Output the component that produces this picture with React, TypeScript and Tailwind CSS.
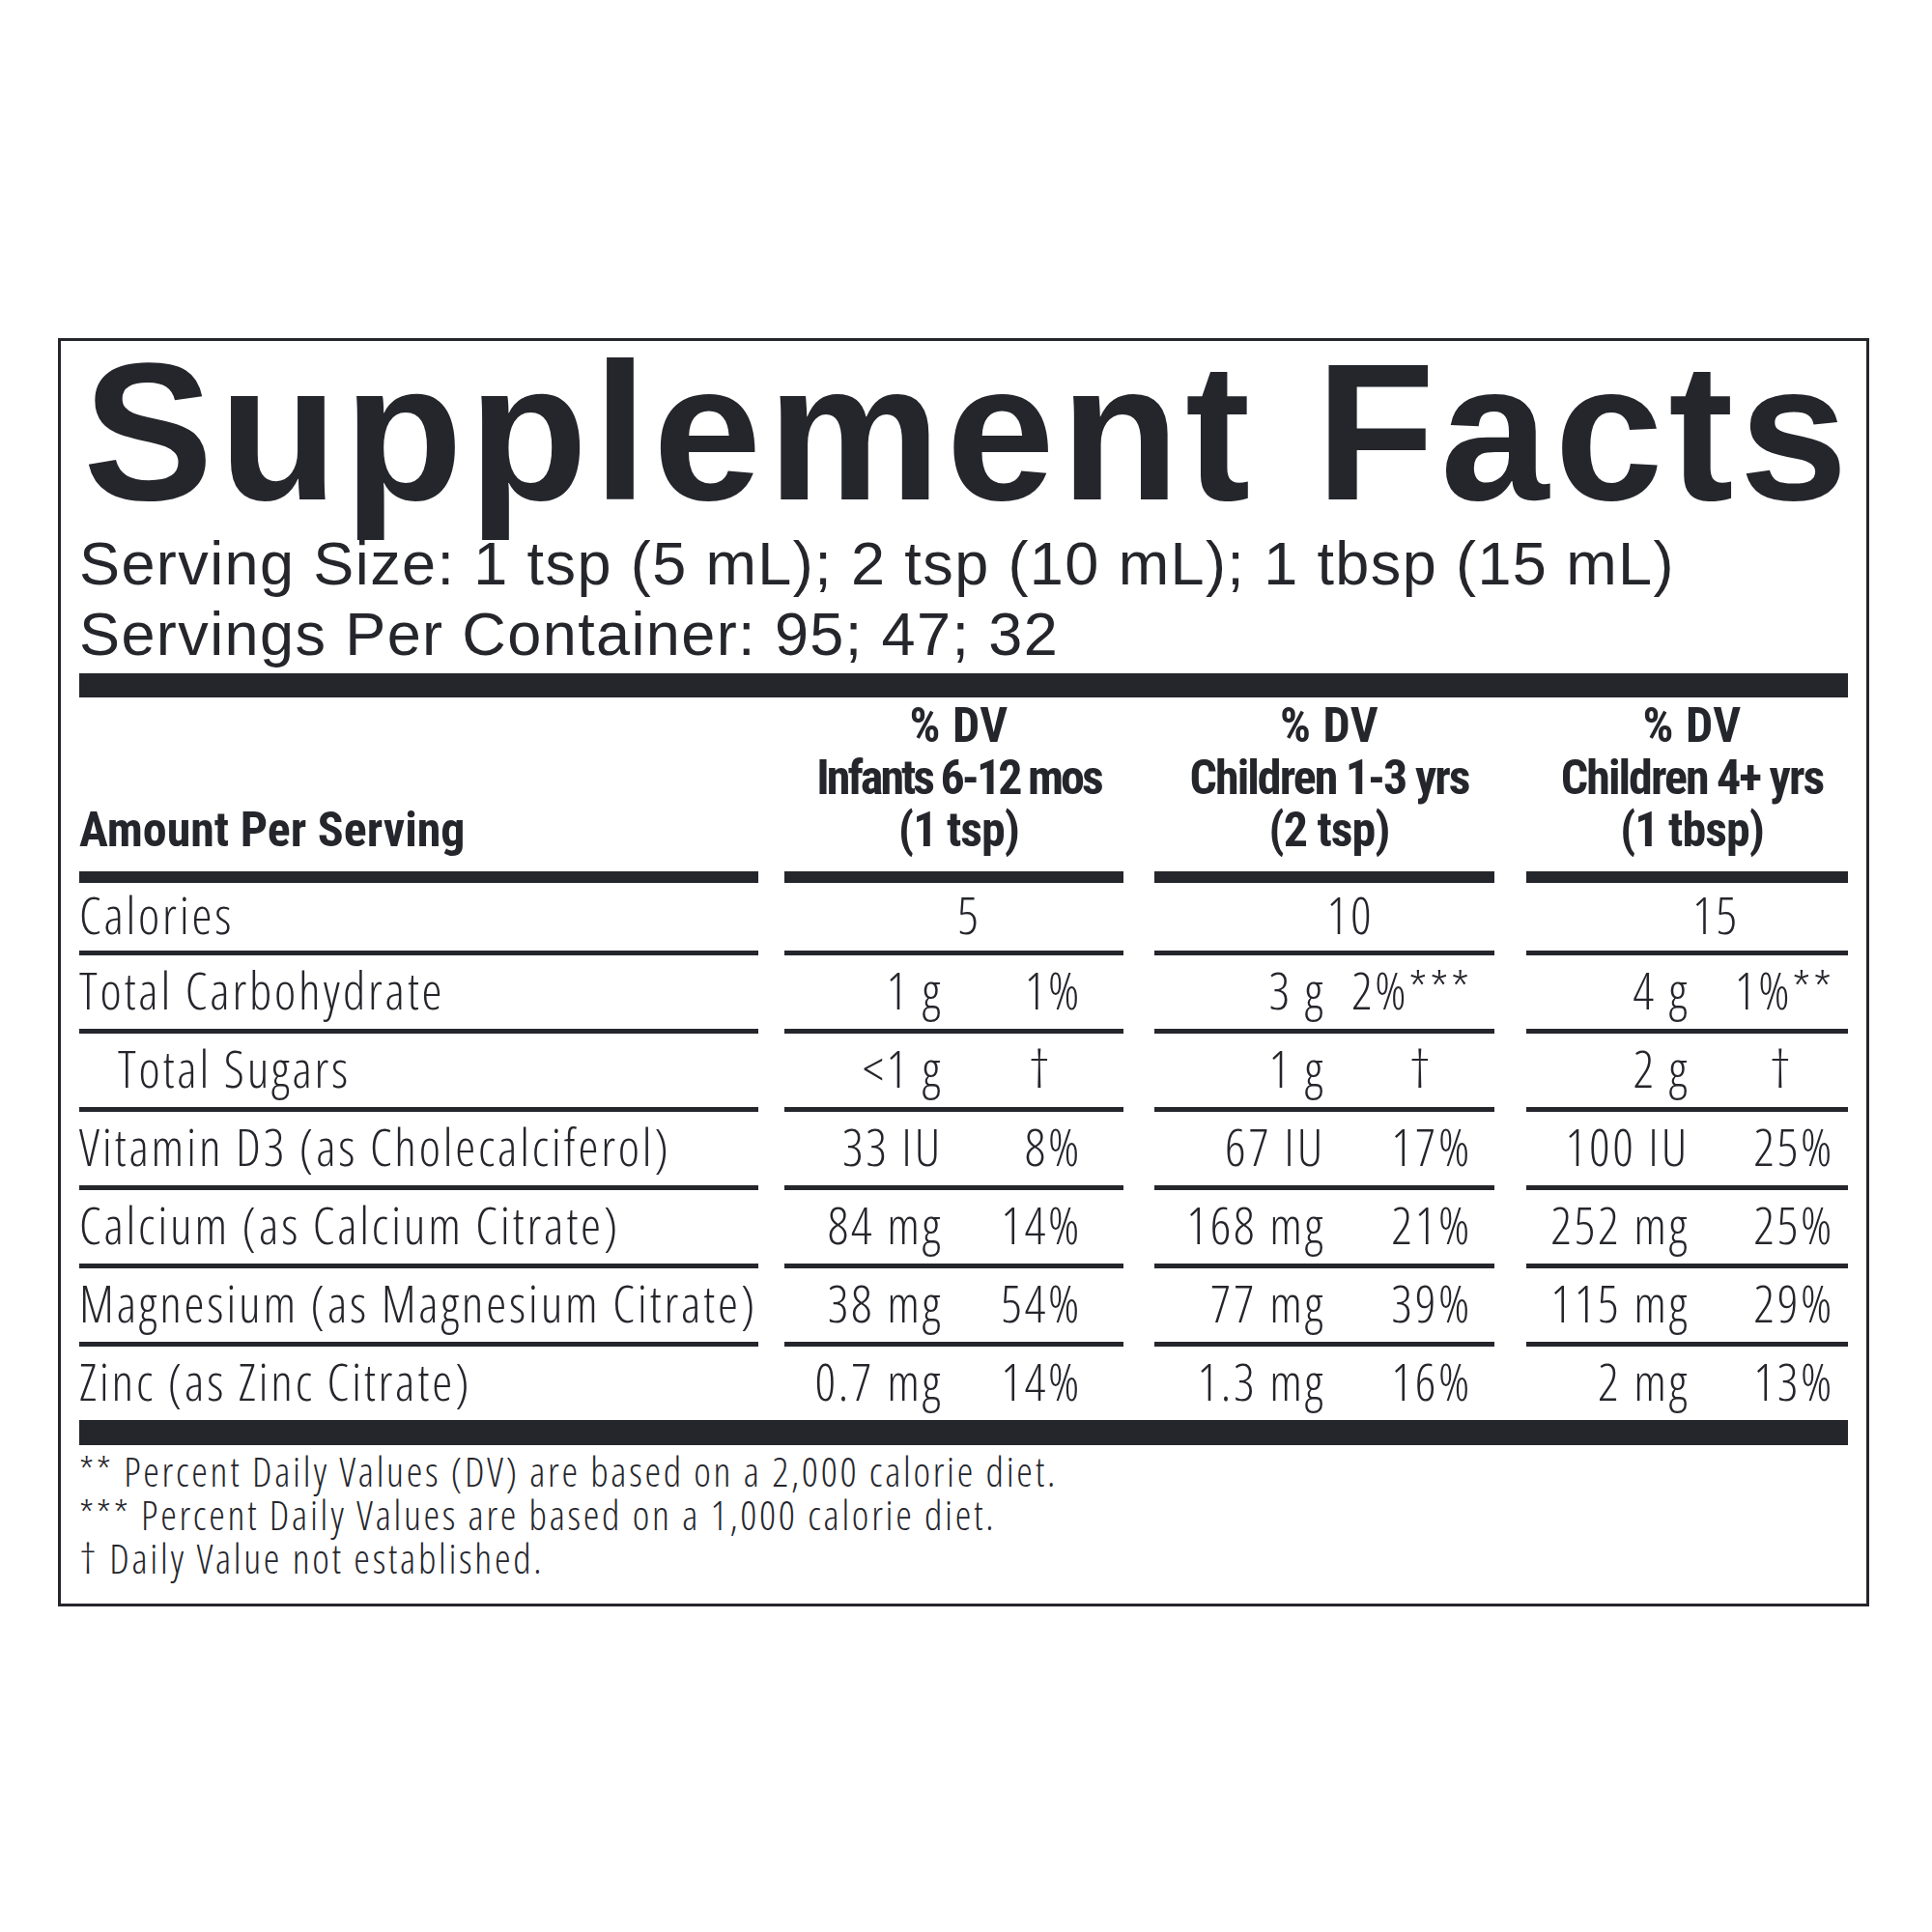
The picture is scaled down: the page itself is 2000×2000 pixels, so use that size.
import React from 'react';

type Cell = string | [string, string];
type Row = { label: string; indent?: boolean; cal?: boolean; vals: Cell[] };

const rows: Row[] = [
  { label: 'Calories', cal: true, vals: ['5', '10', '15'] },
  { label: 'Total Carbohydrate', vals: [['1 g', '1%'], ['3 g', '2%***'], ['4 g', '1%**']] },
  { label: 'Total Sugars', indent: true, vals: [['<1 g', '†'], ['1 g', '†'], ['2 g', '†']] },
  { label: 'Vitamin D3 (as Cholecalciferol)', vals: [['33 IU', '8%'], ['67 IU', '17%'], ['100 IU', '25%']] },
  { label: 'Calcium (as Calcium Citrate)', vals: [['84 mg', '14%'], ['168 mg', '21%'], ['252 mg', '25%']] },
  { label: 'Magnesium (as Magnesium Citrate)', vals: [['38 mg', '54%'], ['77 mg', '39%'], ['115 mg', '29%']] },
  { label: 'Zinc (as Zinc Citrate)', vals: [['0.7 mg', '14%'], ['1.3 mg', '16%'], ['2 mg', '13%']] },
];

const cols = [
  { wrap: 'ml-[27px] w-[351px]', amt: 'w-[164px]', pct: 'w-[144px]', cal: 'pl-[32px]', dag: 'pr-[30px]', star: '', h: 'tracking-[-3px]' },
  { wrap: 'ml-[32px] w-[352px]', amt: 'w-[177px]', pct: 'w-[152px]', cal: 'pl-[54px]', dag: 'pr-[40px]', star: 'mr-[-20px]', h: 'tracking-[-2px]' },
  { wrap: 'ml-[33px] w-[333px]', amt: 'w-[169px]', pct: 'w-[150px]', cal: 'pl-[60px]', dag: 'pr-[42px]', star: '', h: 'tracking-[-2px]' },
];

const headers = [
  ['% DV', 'Infants 6-12 mos', '(1 tsp)'],
  ['% DV', 'Children 1-3 yrs', '(2 tsp)'],
  ['% DV', 'Children 4+ yrs', '(1 tbsp)'],
];

export default function App() {
  return (
    <div className="w-[2000px] h-[2000px] bg-white pt-[350px] pl-[60px] text-[#25262c]">
      <div className="w-[1875px] h-[1313px] border-[3px] border-[#25262c] px-[19px] pt-[19px] flex flex-col">
        <div className="font-['Liberation_Sans',Arial,sans-serif] font-bold text-[202px] leading-[150px] tracking-[5.8px] pl-[4px] whitespace-nowrap">
          Supplement Facts
        </div>
        <div className="mt-[25px] font-['Liberation_Sans',Arial,sans-serif] text-[63px] leading-[73px] tracking-[1.4px] whitespace-nowrap">
          <div>Serving Size: 1 tsp (5 mL); 2 tsp (10 mL); 1 tbsp (15 mL)</div>
          <div>Servings Per Container: 95; 47; 32</div>
        </div>
        <div className="mt-[4px] h-[25px] bg-[#25262c]" />

        <div className="font-['Open_Sans',sans-serif] font-light font-stretch-condensed">
          <div className="flex items-end pt-[2px] pb-[16px] font-['Roboto',sans-serif] font-bold font-stretch-condensed text-[50px] leading-[54px] whitespace-nowrap">
            <div className="w-[703px]">Amount Per Serving</div>
            {headers.map((h, i) => (
              <div key={i} className={`${cols[i].wrap} text-center pl-[10px]`}>
                <div className="tracking-[0.5px]">{h[0]}</div>
                <div className={cols[i].h}>{h[1]}</div>
                <div className="tracking-[-1px]">{h[2]}</div>
              </div>
            ))}
          </div>
          <div className="flex h-[12px]">
            <div className="w-[703px] bg-[#25262c]" />
            {cols.map((c, i) => (
              <div key={i} className={`${c.wrap} bg-[#25262c]`} />
            ))}
          </div>

          {rows.map((r, ri) => {
            const last = ri === rows.length - 1;
            const h = r.cal ? 'h-[75px]' : last ? 'h-[76px]' : 'h-[81px]';
            const b = last ? '' : 'border-b-[5px] border-[#25262c]';
            return (
              <div key={r.label} className={`flex text-[53px] leading-none tracking-[2.8px] whitespace-nowrap ${h}`}>
                <div className={`w-[703px] flex items-center pb-[6px] ${b} ${r.indent ? 'pl-[40px]' : ''}`}>
                  {r.label}
                </div>
                {r.vals.map((v, ci) => {
                  const c = cols[ci];
                  if (typeof v === 'string') {
                    return (
                      <div key={ci} className={`${c.wrap} flex items-center justify-center pb-[6px] ${c.cal} ${b}`}>
                        {v}
                      </div>
                    );
                  }
                  const [amt, pct] = v;
                  const isDag = pct === '†';
                  const hasStar = pct.includes('*');
                  return (
                    <div key={ci} className={`${c.wrap} flex items-center pb-[6px] ${b}`}>
                      <span className={`${c.amt} text-right`}>{amt}</span>
                      <span className={`${c.pct} text-right ${isDag ? c.dag : ''} ${hasStar ? c.star : ''}`}>
                        {pct}
                      </span>
                    </div>
                  );
                })}
              </div>
            );
          })}

          <div className="h-[26px] bg-[#25262c]" />
          <div className="mt-[4px] text-[42px] leading-[45px] tracking-[2.7px] whitespace-nowrap">
            <div>** Percent Daily Values (DV) are based on a 2,000 calorie diet.</div>
            <div>*** Percent Daily Values are based on a 1,000 calorie diet.</div>
            <div>† Daily Value not established.</div>
          </div>
        </div>
      </div>
    </div>
  );
}
